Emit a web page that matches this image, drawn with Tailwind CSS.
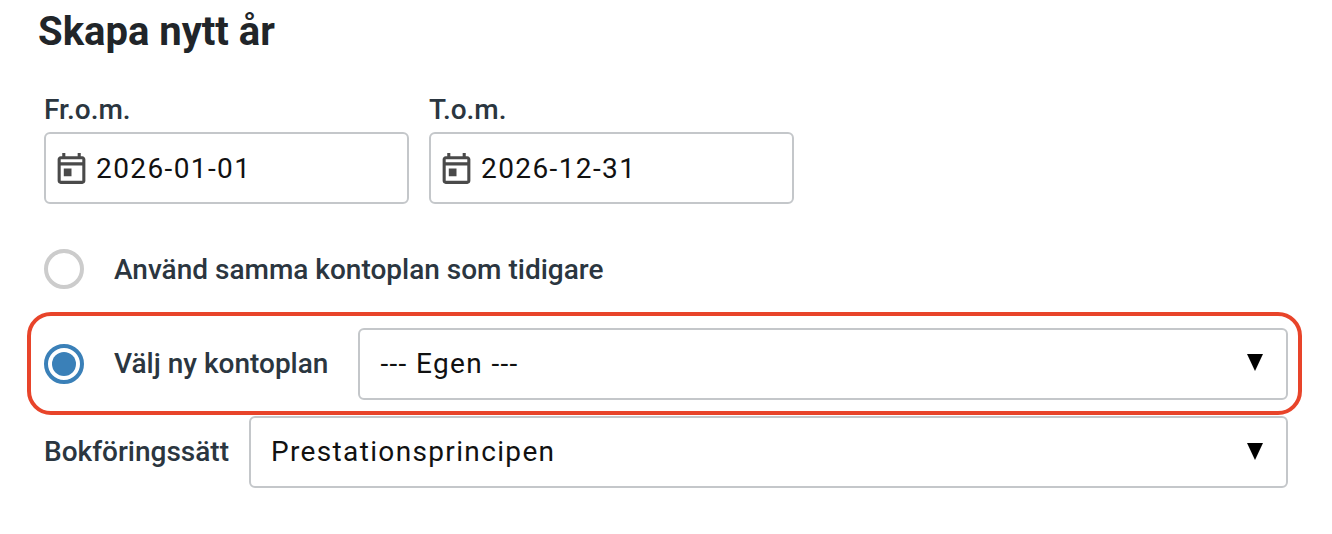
<!DOCTYPE html>
<html lang="en">
<head>
<meta charset="utf-8"/>
<title>Skapa nytt år</title>
<script src="https://cdn.jsdelivr.net/npm/@tailwindcss/browser@4"></script>
</head>
<body class="bg-white font-['Roboto',sans-serif] overflow-hidden">
<div class="w-[1332px] h-[534px] pl-[44px] pr-[44px]">
  <h1 class="-ml-[6px] pt-[11px] text-[40px] leading-[42px] font-bold text-[#212529]">Skapa nytt år</h1>

  <div class="flex gap-[20px] mt-[41px]">
    <div class="w-[365px]">
      <label class="block text-[28px] leading-[32px] font-medium text-[#2b3640]">Fr.o.m.</label>
      <div class="mt-[6px] h-[72px] border-2 border-[#c4c7ca] rounded-[6px] flex items-center pl-[7px]">
        <svg class="w-[37px] h-[37px] shrink-0" viewBox="0 0 24 24" fill="#4a4a4a"><path d="M19 4h-1V2h-2v2H8V2H6v2H5c-1.100 0-2 .9-2 2v14c0 1.100.9 2 2 2h14c1.100 0 2-.9 2-2V6c0-1.100-.9-2-2-2zm0 16H5V10h14v10zm0-12H5V6h14v2zM7 12h5v5H7z"/></svg>
        <span class="ml-[6px] pt-[1px] text-[28px] tracking-[1.4px] text-[#111]">2026-01-01</span>
      </div>
    </div>
    <div class="w-[365px]">
      <label class="block text-[28px] leading-[32px] font-medium text-[#2b3640]">T.o.m.</label>
      <div class="mt-[6px] h-[72px] border-2 border-[#c4c7ca] rounded-[6px] flex items-center pl-[7px]">
        <svg class="w-[37px] h-[37px] shrink-0" viewBox="0 0 24 24" fill="#4a4a4a"><path d="M19 4h-1V2h-2v2H8V2H6v2H5c-1.100 0-2 .9-2 2v14c0 1.100.9 2 2 2h14c1.100 0 2-.9 2-2V6c0-1.100-.9-2-2-2zm0 16H5V10h14v10zm0-12H5V6h14v2zM7 12h5v5H7z"/></svg>
        <span class="ml-[6px] pt-[1px] text-[28px] tracking-[1.4px] text-[#111]">2026-12-31</span>
      </div>
    </div>
  </div>

  <div class="flex items-center h-[40px] mt-[45px]">
    <span class="w-[40px] h-[40px] rounded-full border-[4px] border-[#cccccc] shrink-0"></span>
    <span class="ml-[30px] pt-[1px] text-[28px] font-medium text-[#2b3640]">Använd samma kontoplan som tidigare</span>
  </div>

  <div class="flex items-center h-[103px] mt-[23px] -ml-[17px] -mr-[14px] pl-[13px] pr-[10px] border-[4px] border-[#e8442a] rounded-[24px]">
    <span class="w-[40px] h-[40px] rounded-full border-[4px] border-[#3a80b8] shrink-0 flex items-center justify-center">
      <span class="w-[24px] h-[24px] rounded-full bg-[#3a80b8]"></span>
    </span>
    <span class="ml-[30px] text-[28px] font-medium text-[#2b3640]">Välj ny kontoplan</span>
    <div class="ml-[30px] flex-1 h-[72px] border-2 border-[#c4c7ca] rounded-[6px] flex items-center justify-between pl-[20px] pr-[23px]">
      <span class="text-[28px] tracking-[1.35px] text-[#111]">--- Egen ---</span>
      <svg class="w-[16px] h-[17px] -mt-[2px]" viewBox="0 0 16 17"><path d="M0 0h16L8 17z" fill="#000"/></svg>
    </div>
  </div>

  <div class="flex items-center mt-[1px]">
    <span class="text-[28px] font-medium text-[#2b3640]">Bokföringssätt</span>
    <div class="ml-[20px] flex-1 h-[72px] border-2 border-[#c4c7ca] rounded-[6px] flex items-center justify-between pl-[20px] pr-[23px]">
      <span class="text-[28px] tracking-[1.35px] text-[#111]">Prestationsprincipen</span>
      <svg class="w-[16px] h-[17px] -mt-[2px]" viewBox="0 0 16 17"><path d="M0 0h16L8 17z" fill="#000"/></svg>
    </div>
  </div>
</div>
</body>
</html>
